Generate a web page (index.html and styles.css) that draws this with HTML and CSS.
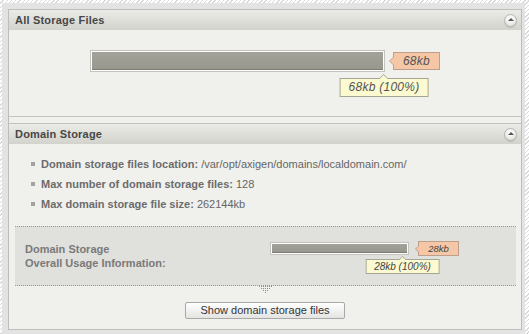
FILE: index.html
```html
<!DOCTYPE html>
<html>
<head>
<meta charset="utf-8">
<link rel="stylesheet" href="styles.css">
</head>
<body>
<div class="frame">
  <div class="box">
    <section class="panel">
      <div class="phead"><span class="ptitle">All Storage Files</span><span class="toggle"></span></div>
      <div class="usage-all">
        <div class="meter big">
          <div class="bar"><div class="fill" style="width:100%"></div><div class="tip">68kb (100%)</div></div>
          <div class="flag">68kb</div>
        </div>
      </div>
    </section>
    <section class="panel">
      <div class="phead"><span class="ptitle">Domain Storage</span><span class="toggle"></span></div>
      <div class="pbody">
        <ul class="info">
          <li><span><b>Domain storage files location:</b> /var/opt/axigen/domains/localdomain.com/</span></li>
          <li><span><b>Max number of domain storage files:</b> 128</span></li>
          <li><span><b>Max domain storage file size:</b> 262144kb</span></li>
        </ul>
        <div class="usage-box">
          <div class="usage-label">Domain Storage<br>Overall Usage Information:</div>
          <div class="meter small">
            <div class="bar"><div class="fill" style="width:100%"></div><div class="tip">28kb (100%)</div></div>
            <div class="flag">28kb</div>
          </div>
        </div>
        <svg class="more" width="13" height="7" viewBox="0 0 13 7">
          <g fill="#8a8a8a">
            <rect x="0" y="0" width="1" height="1"/><rect x="2" y="0" width="1" height="1"/><rect x="4" y="0" width="1" height="1"/><rect x="6" y="0" width="1" height="1"/><rect x="8" y="0" width="1" height="1"/><rect x="10" y="0" width="1" height="1"/><rect x="12" y="0" width="1" height="1"/>
            <rect x="2" y="2" width="1" height="1"/><rect x="4" y="2" width="1" height="1"/><rect x="6" y="2" width="1" height="1"/><rect x="8" y="2" width="1" height="1"/><rect x="10" y="2" width="1" height="1"/>
            <rect x="4" y="4" width="1" height="1"/><rect x="6" y="4" width="1" height="1"/><rect x="8" y="4" width="1" height="1"/>
            <rect x="6" y="6" width="1" height="1"/>
          </g>
        </svg>
        <button class="btn" type="button">Show domain storage files</button>
      </div>
    </section>
  </div>
</div>
</body>
</html>
```

FILE: styles.css
```css
* { box-sizing: border-box; }
html, body { margin: 0; height: 100%; }
body {
  background: repeating-linear-gradient(135deg, #ffffff 0 2px, #dadada 2px 3px);
  font-family: "Liberation Sans", Arial, sans-serif;
  overflow: hidden;
}
.frame {
  margin: 3px 4px 0 2px;
  background: #e3e3e3;
  padding: 6px 3px 6px 6px;
}
.box {
  border: 1px solid #bdbdb9;
  background: #f0f0ec;
}
.panel + .panel { margin-top: 6px; }
.panel + .panel .phead { border-top: 1px solid #c0c0bc; height: 21px; }
.phead {
  height: 20px;
  display: flex;
  align-items: center;
  justify-content: space-between;
  padding: 0 4px 0 6px;
  background: linear-gradient(#ebebe7, #d3d3cd);
}
.ptitle {
  font-size: 11px;
  font-weight: bold;
  color: #474747;
  letter-spacing: 0.2px;
}
.toggle {
  width: 13px;
  height: 13px;
  border: 1px solid #b6b6b2;
  border-radius: 50%;
  background: radial-gradient(circle at 50% 35%, #ffffff 0, #f2f2f0 40%, #d6d6d2 100%);
  box-shadow: 0 1px 1px rgba(0,0,0,0.12);
  display: flex;
  align-items: center;
  justify-content: center;
}
.toggle::before {
  content: "";
  border-left: 3px solid transparent;
  border-right: 3px solid transparent;
  border-bottom: 3px solid #555;
  margin-top: -1px;
}
.usage-all {
  padding: 20px 0 44px;
  display: flex;
  justify-content: center;
  border-bottom: 1px solid #c4c4c0;
}
.meter { display: flex; align-items: center; }
.bar {
  position: relative;
  border: 1px solid #c2c2be;
  background: #fff;
  padding: 1px;
}
.fill {
  background: linear-gradient(#a2a29a, #98988f);
  border-bottom: 1px solid #7c7c76;
}
.big .bar { width: 295px; height: 22px; }
.big .fill { height: 18px; }
.small .bar { width: 139px; height: 13px; }
.small .fill { height: 9px; }

.flag {
  position: relative;
  background: #f6c7a6;
  border: 1px solid #bf9f8b;
  color: #555;
  font-style: italic;
  text-align: center;
}
.big .flag { margin-left: 8px; width: 47px; height: 18px; font-size: 12px; line-height: 16px; letter-spacing: 0.3px; }
.small .flag { margin-left: 9px; width: 41px; height: 15px; font-size: 9.5px; line-height: 13px; color: #444; }
.flag::before, .flag::after {
  content: "";
  position: absolute;
  right: 100%;
  top: 50%;
  border-style: solid;
  border-color: transparent;
}
.flag::before { margin-top: -5px; border-width: 5px 5px 5px 0; border-right-color: #bf9f8b; }
.flag::after { margin-top: -4px; border-width: 4px 4px 4px 0; border-right-color: #f6c7a6; }
.small .flag::before { margin-top: -4px; border-width: 4px 4px 4px 0; }
.small .flag::after { margin-top: -3px; border-width: 3px 3px 3px 0; }

.tip {
  position: absolute;
  transform: translateX(-50%);
  background: #fcfad0;
  border: 1px solid #a6a696;
  color: #555;
  font-style: italic;
  white-space: nowrap;
}
.big .tip { top: calc(100% + 7px); left: 100%; font-size: 12px; line-height: 17px; padding: 0 8px; letter-spacing: 0.25px; }
.small .tip { top: calc(100% + 5px); left: calc(100% - 5.5px); font-size: 10px; line-height: 13px; padding: 0 8px; color: #444; }
.tip::before, .tip::after {
  content: "";
  position: absolute;
  bottom: 100%;
  left: 50%;
  border-style: solid;
  border-color: transparent;
}
.tip::before { margin-left: -5px; border-width: 0 5px 5px 5px; border-bottom-color: #a6a696; }
.tip::after { margin-left: -4px; border-width: 0 4px 4px 4px; border-bottom-color: #fcfad0; }
.small .tip::before { margin-left: -4px; border-width: 0 4px 4px 4px; }
.small .tip::after { margin-left: -3px; border-width: 0 3px 3px 3px; }

.info {
  list-style: none;
  margin: 0;
  padding: 10px 0 0 22px;
}
.info li {
  display: flex;
  align-items: center;
  height: 20px;
  font-size: 11px;
  color: #666;
}
.info li::before {
  content: "";
  width: 4px;
  height: 4px;
  background: #a2a2a2;
  margin-right: 6px;
}
.info b { color: #6c6c6c; }

.usage-box {
  margin: 12px 5px 0 6px;
  height: 60px;
  background: #e0e0dc;
  border-top: 1px dotted #999;
  border-bottom: 1px dotted #999;
  display: flex;
  padding-left: 10px;
}
.usage-label {
  width: 245px;
  align-self: center;
  font-size: 11px;
  font-weight: bold;
  line-height: 14px;
  color: #7a7a7a;
}
.usage-box .meter { align-self: flex-start; padding-top: 14px; }
.more { display: block; margin: 0 auto; }
.btn {
  display: block;
  margin: 9px auto 10px;
  width: 160px;
  height: 17px;
  padding: 0;
  border: 1px solid #a9a9a9;
  border-radius: 2px;
  background: linear-gradient(#ffffff, #e4e4e2);
  font-family: "Liberation Sans", Arial, sans-serif;
  font-size: 11px;
  color: #333;
  line-height: 15px;
}
```
